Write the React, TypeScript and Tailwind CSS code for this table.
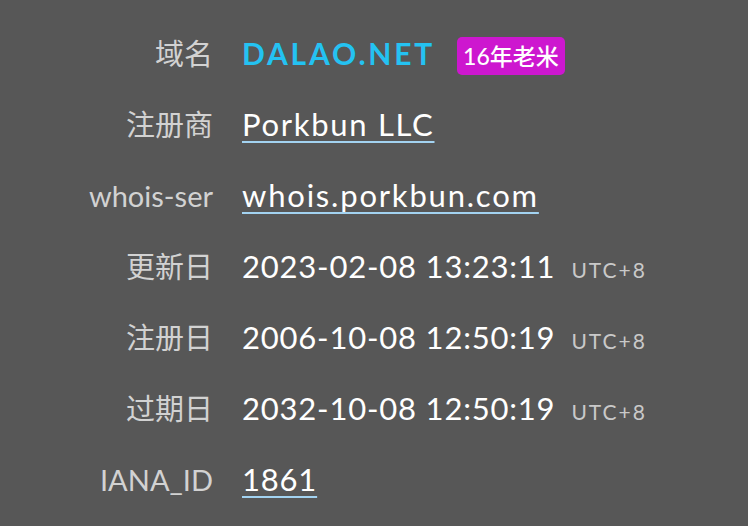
import * as React from 'react';

// -----------------------------------------------------------------------------
// TYPES
// -----------------------------------------------------------------------------

interface Row {
  label: string;
  value: string;
  kind: 'link' | 'time';
  tracking?: string;
}

const SANS = "font-['Lato','Noto_Sans_CJK_SC',sans-serif]";

const rows: Row[] = [
  { label: '注册商', value: 'Porkbun LLC', kind: 'link', tracking: 'tracking-[1.7px]' },
  { label: 'whois-ser', value: 'whois.porkbun.com', kind: 'link', tracking: 'tracking-[1.8px]' },
  { label: '更新日', value: '2023-02-08 13:23:11', kind: 'time' },
  { label: '注册日', value: '2006-10-08 12:50:19', kind: 'time' },
  { label: '过期日', value: '2032-10-08 12:50:19', kind: 'time' },
  { label: 'IANA_ID', value: '1861', kind: 'link', tracking: 'tracking-[0.8px]' }
];

// -----------------------------------------------------------------------------
// PIECES
// -----------------------------------------------------------------------------

function Label({ children }: { children: React.ReactNode }) {
  return (
    <div className="w-[213px] shrink-0 text-right text-[29px] text-[#d2d2d2]">
      {children}
    </div>
  );
}

function Value({ row }: { row: Row }) {
  if (row.kind === 'link') {
    return (
      <a
        href="#"
        className={`text-[31px] text-white underline decoration-[#a3d3f1] decoration-2 underline-offset-[5px] ${row.tracking}`}
      >
        {row.value}
      </a>
    );
  }

  return (
    <div className="flex items-baseline gap-[16px]">
      <span className="text-[31px] tracking-[0.8px] text-white">{row.value}</span>
      <span className="text-[21px] tracking-[2px] text-[#c9c9c9]">UTC+8</span>
    </div>
  );
}

// -----------------------------------------------------------------------------
// APP
// -----------------------------------------------------------------------------

export default function App() {
  return (
    <div className={`min-h-[526px] w-[748px] bg-[#575757] pt-[18px] ${SANS}`}>
      <div className="flex h-[71px] items-center gap-[29px]">
        <Label>域名</Label>
        <div className="flex items-center gap-[22px]">
          <span className="text-[30px] font-bold tracking-[2.8px] text-[#24c2f2]">DALAO.NET</span>
          <span className="mt-[5px] rounded-[5px] bg-[#cd17cf] px-[6px] text-[23px] font-medium leading-[38px] text-white">
            16年老米
          </span>
        </div>
      </div>

      {rows.map((row, index) => (
        <div key={index} className="flex h-[71px] items-center gap-[29px]">
          <Label>{row.label}</Label>
          <Value row={row} />
        </div>
      ))}
    </div>
  );
}
